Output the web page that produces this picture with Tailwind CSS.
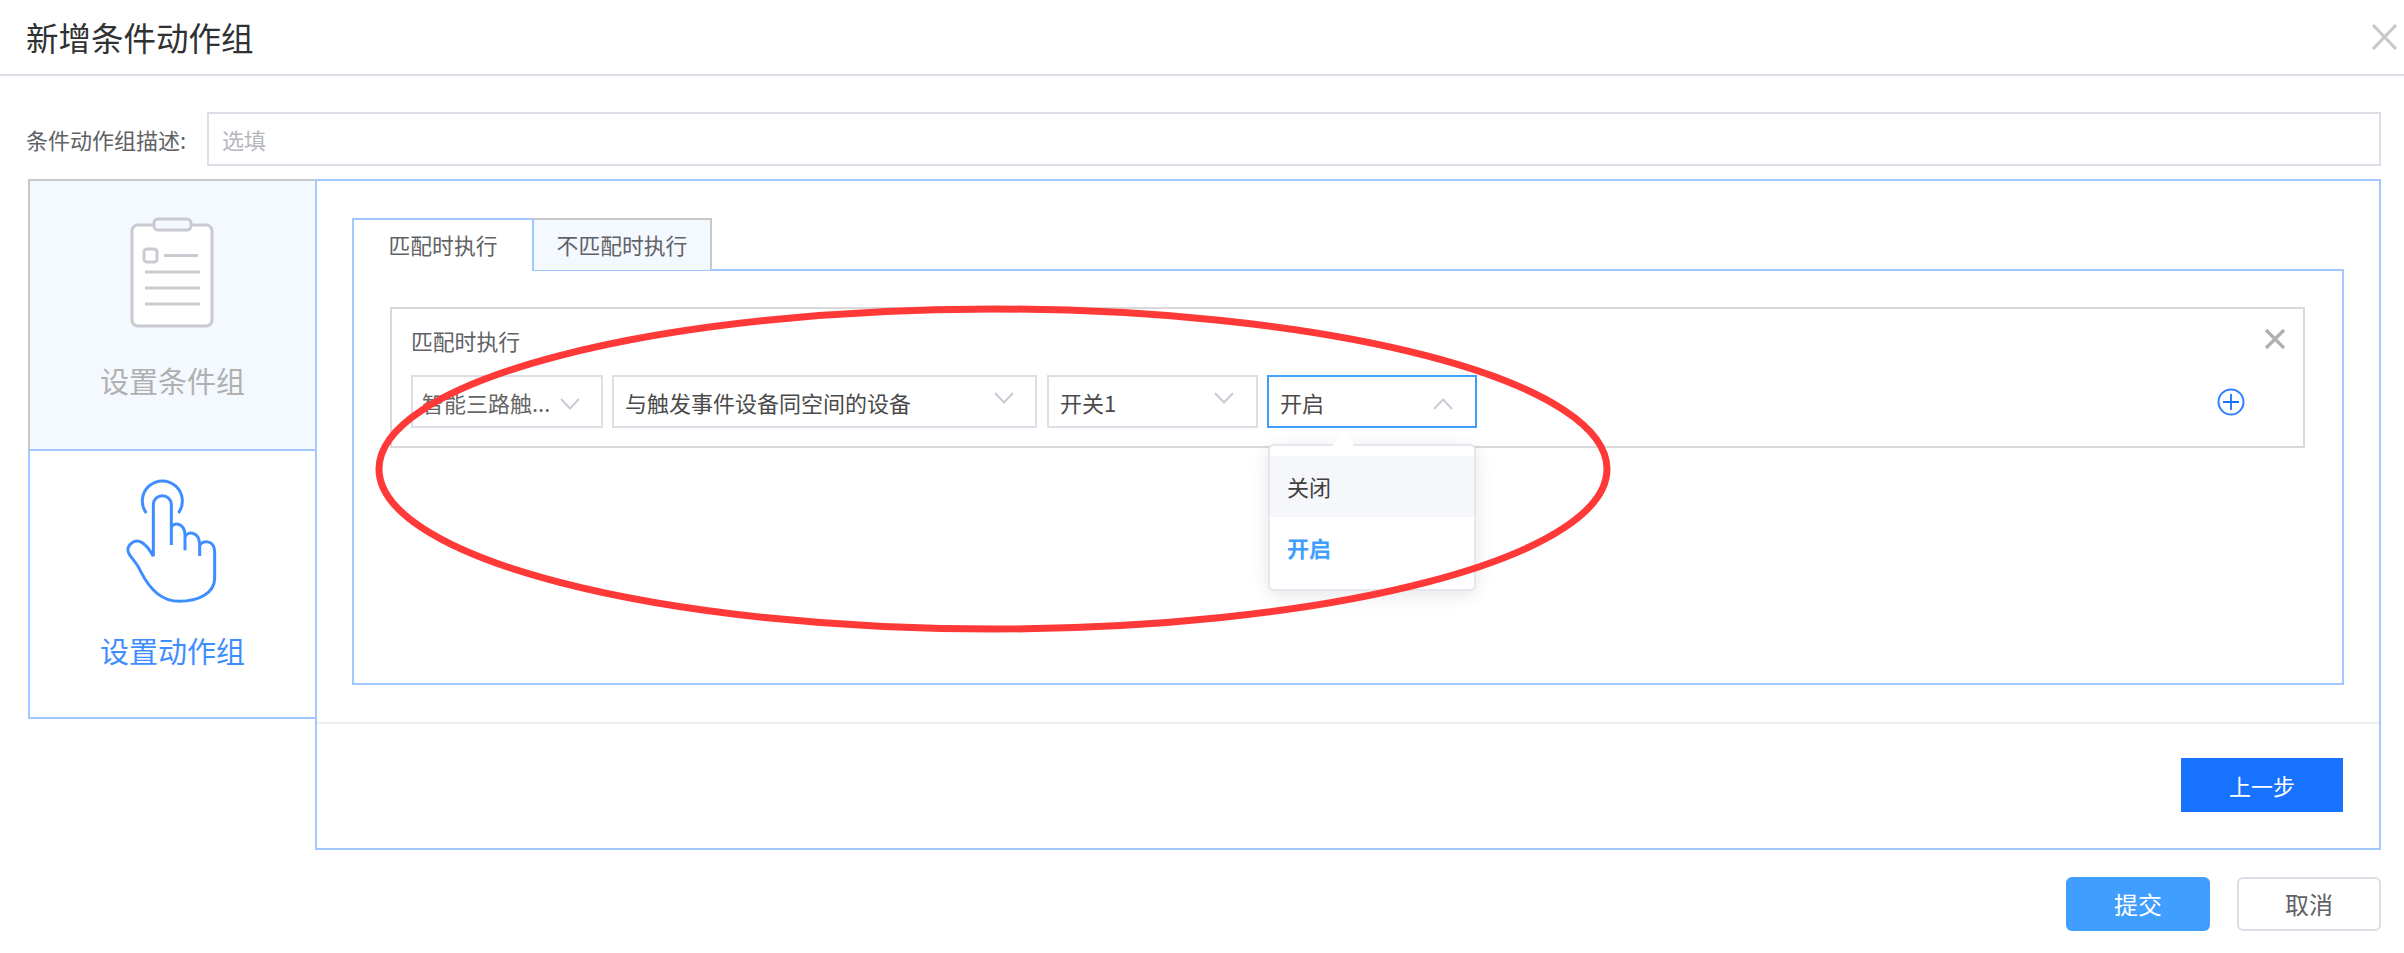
<!DOCTYPE html>
<html lang="zh-CN">
<head>
  <meta charset="UTF-8">
  <title>新增条件动作组</title>
  <script src="https://cdn.jsdelivr.net/npm/@tailwindcss/browser@4"></script>
</head>
<body class="relative bg-white overflow-hidden h-[953px] font-['Noto_Sans_CJK_SC','Noto_Sans',sans-serif] text-[#606266]">

<!-- Header -->
<header class="h-[76px] border-b-2 border-[#dcdfe6] flex items-center justify-between pl-[26px] pr-[6px]">
  <h1 class="text-[32.500px] leading-none text-[#303133]">新增条件动作组</h1>
  <svg width="27" height="28" viewBox="0 0 27 28" class="mb-[1px]"><path d="M2 2L25 26M25 2L2 26" stroke="#c8c8c8" stroke-width="3.2" fill="none"/></svg>
</header>

<div class="pl-[28px] pr-[23px]">
  <!-- Description -->
  <div class="mt-[36px] h-[54px] flex items-center">
    <label class="w-[181px] -ml-[2px] text-[22px] leading-none whitespace-nowrap">条件动作组描述:</label>
    <input placeholder="选填" class="flex-1 h-full border-2 border-[#dcdfe6] px-[13px] text-[22px] outline-none placeholder:text-[#b4b7bd]">
  </div>

  <div class="mt-[13px] flex">
    <!-- Steps -->
    <div class="w-[287px] shrink-0">
      <div class="h-[272px] bg-[#f4f8ff] border-t-2 border-l-2 border-t-[#c8c8c8] border-l-[#c8c8c8] border-b-2 border-b-[#a3c8ff] flex flex-col items-center">
        <svg width="90" height="112" viewBox="0 0 90 112" class="mt-[36px] -ml-[1px]">
          <rect x="5" y="8" width="80" height="101" rx="6" fill="#fff" stroke="#c9cad2" stroke-width="3"/>
          <rect x="27" y="2" width="37" height="11" rx="4" fill="#f4f8ff" stroke="#c9cad2" stroke-width="3"/>
          <rect x="17" y="32" width="13" height="13" rx="3" fill="none" stroke="#c9cad2" stroke-width="3"/>
          <path d="M37 38.500H71M18 55H73M18 71H73M18 87H73" stroke="#c9cad2" stroke-width="3.200" fill="none"/>
        </svg>
        <span class="mt-[37px] text-[29px] leading-none text-[#b0b0b0]">设置条件组</span>
      </div>
      <div class="h-[268px] border-l-2 border-b-2 border-[#a3c8ff] flex flex-col items-center">
        <svg width="104" height="134" viewBox="300 70 312 402" class="mt-[22px] -ml-[4px]" fill="none" stroke="#3f8eff" stroke-width="9">
          <path d="M382 190A60 60 0 1 1 478 190"/>
          <path d="M403 320V165A27 27 0 0 1 457 165V286"/>
          <path d="M457 232C468 215 497 222 498 256V302"/>
          <path d="M498 262C506 242 540 246 542 282V319"/>
          <path d="M542 288C550 270 585 270 587 305V385C587 430 540 455 480 455C420 455 385 405 365 365C355 340 340 330 330 312C318 290 345 265 368 278C380 285 395 305 403 320"/>
        </svg>
        <span class="mt-[29px] text-[29px] leading-none text-[#3f8eff]">设置动作组</span>
      </div>
    </div>

    <!-- Panel -->
    <div class="flex-1 h-[671px] border-2 border-[#a3c8ff]">
      <div class="pt-[37px] pl-[35px] pr-[35px]">
        <!-- Tabs -->
        <div class="flex h-[53px] text-[21.800px]">
          <div class="relative z-10 w-[182px] h-[53px] bg-white border-t-2 border-x-2 border-[#a3c8ff] flex items-center justify-center">匹配时执行</div>
          <div class="w-[180px] h-[52px] -ml-[2px] bg-[#f4f8ff] border-t-2 border-r-2 border-[#c8c8c8] flex items-center justify-center pl-[2px]">不匹配时执行</div>
        </div>
        <div class="-mt-[2px] h-[416px] border-2 border-[#a3c8ff] pt-[36px] pl-[36px] pr-[37px]">
          <!-- Action group -->
          <div class="h-[141px] border-2 border-[#d9d9d9]">
            <div class="flex items-center justify-between pl-[19px] pr-[17px] pt-[18px] h-[66px]">
              <span class="text-[21.800px] leading-none -mt-[20px]">匹配时执行</span>
              <svg width="22" height="22" viewBox="0 0 22 22" class="-mt-[25px]"><path d="M2 2L20 20M20 2L2 20" stroke="#b0b0b0" stroke-width="3.200" fill="none"/></svg>
            </div>
            <div class="flex items-center pl-[19px] text-[22px] text-[#4a4a4a]">
              <div class="w-[192px] h-[53px] border-2 border-[#dcdfe6] flex items-center justify-between pl-[9px] pr-[21px] text-[#666]">
                <span class="leading-none whitespace-nowrap">智能三路触...</span>
                <svg width="20" height="12" viewBox="0 0 20 12" class="mt-[4px]"><path d="M1 1L10 10.500L19 1" stroke="#c8ccd4" stroke-width="2" fill="none"/></svg>
              </div>
              <div class="ml-[9px] w-[425px] h-[53px] border-2 border-[#dcdfe6] flex items-center justify-between pl-[11px] pr-[21px]">
                <span class="leading-none whitespace-nowrap">与触发事件设备同空间的设备</span>
                <svg width="20" height="12" viewBox="0 0 20 12" class="-mt-[8px]"><path d="M1 1L10 10.500L19 1" stroke="#c8ccd4" stroke-width="2" fill="none"/></svg>
              </div>
              <div class="ml-[10px] w-[211px] h-[53px] border-2 border-[#dcdfe6] flex items-center justify-between pl-[11px] pr-[22px]">
                <span class="leading-none whitespace-nowrap">开关1</span>
                <svg width="20" height="12" viewBox="0 0 20 12" class="-mt-[8px]"><path d="M1 1L10 10.500L19 1" stroke="#c8ccd4" stroke-width="2" fill="none"/></svg>
              </div>
              <div class="relative ml-[9px] w-[210px] h-[53px] border-2 border-[#409eff] flex items-center justify-between pl-[11px] pr-[22px]">
                <span class="leading-none whitespace-nowrap">开启</span>
                <svg width="20" height="12" viewBox="0 0 20 12" class="mt-[4px]"><path d="M1 11L10 1.500L19 11" stroke="#c8ccd4" stroke-width="2" fill="none"/></svg>
                <!-- Dropdown menu -->
                <div class="absolute left-[-1px] top-[67px] w-[208px] h-[147px] bg-white border-2 border-[#e4e7ed] rounded-[6px] shadow-[0_4px_18px_rgba(0,0,0,0.10)] pt-[10px] z-10">
                  <div class="absolute left-[66px] -top-[9px] w-[15px] h-[15px] rotate-45 bg-white"></div>
                  <div class="relative h-[61px] bg-[#f5f7fa] flex items-center pl-[17px] text-[#3f3f3f]">关闭</div>
                  <div class="relative h-[60px] flex items-center pl-[17px] font-bold text-[#409eff]">开启</div>
                </div>
              </div>
              <svg width="28" height="28" viewBox="0 0 28 28" class="ml-auto mr-[58px]">
                <circle cx="14" cy="14" r="12.500" fill="none" stroke="#2f7fff" stroke-width="2"/>
                <path d="M14 6V22M6 14H22" stroke="#1772ff" stroke-width="1.800" fill="none"/>
              </svg>
            </div>
          </div>
        </div>
      </div>
      <div class="mt-[37px] border-t-2 border-[#eeeeee] pt-[34px] pr-[36px] flex justify-end">
        <button class="w-[162px] h-[54px] bg-[#1772ff] text-white text-[22px]">上一步</button>
      </div>
    </div>
  </div>

  <!-- Footer -->
  <div class="mt-[27px] flex justify-end gap-[27px] text-[24px]">
    <button class="w-[144px] h-[54px] rounded-[6px] bg-[#409eff] text-white">提交</button>
    <button class="w-[144px] h-[54px] rounded-[6px] border-2 border-[#dcdfe6] bg-white text-[#606266]">取消</button>
  </div>
</div>

<!-- Red annotation drawn over the screenshot -->
<svg class="absolute inset-0 z-20 pointer-events-none" width="2404" height="953" fill="none">
  <ellipse cx="993" cy="469" rx="614" ry="160" stroke="#ff3838" stroke-width="7"/>
</svg>
</body>
</html>
